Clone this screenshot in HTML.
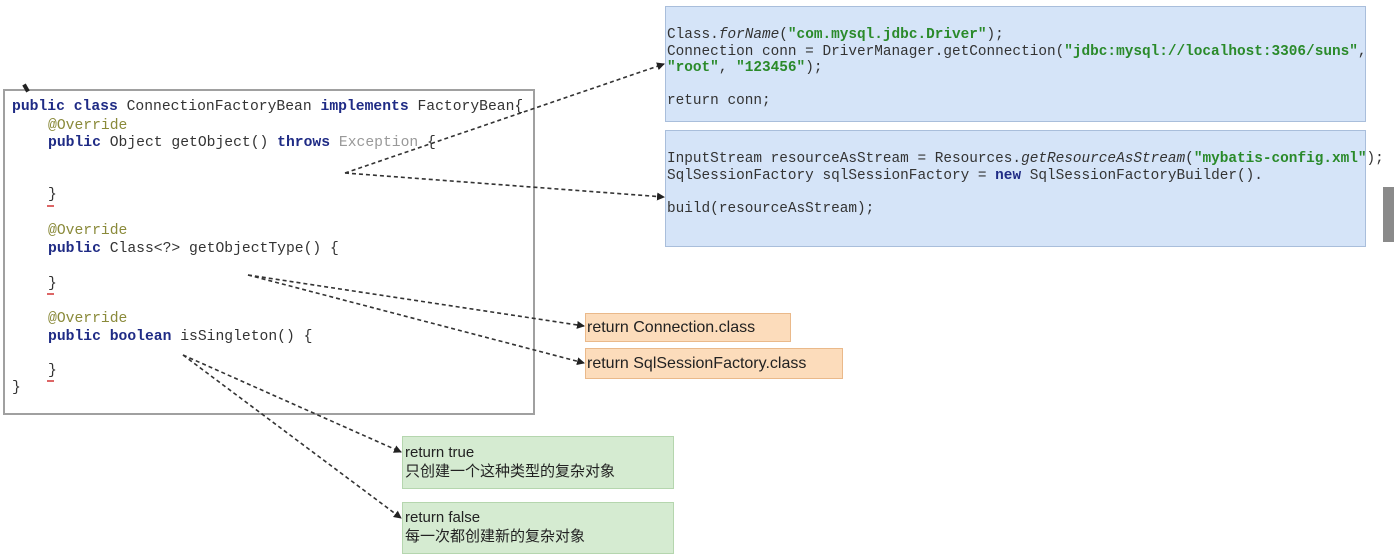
<!DOCTYPE html>
<html><head><meta charset="utf-8">
<style>
html,body{margin:0;padding:0;background:#fff;width:1394px;height:557px;overflow:hidden;position:relative}
.abs{position:absolute}
.mono{font-family:"Liberation Mono","DejaVu Sans Mono",monospace;font-size:14.4px;white-space:pre;color:#333}
.lc{font-size:14.7px}
.k{color:#1f2b85;font-weight:bold}
.an{color:#8a8a3a}
.s{color:#2a8a2a;font-weight:bold}
.gr{color:#999}
.i{font-style:italic}
.box{position:absolute;box-sizing:border-box}
.sans{font-family:"Liberation Sans","Noto Sans CJK SC",sans-serif;font-size:15px;color:#222}
</style></head><body>

<div class="box" style="left:3px;top:89px;width:532px;height:326px;border:2px solid #a0a0a0"></div>
<div class="abs" style="left:24px;top:84px;width:4px;height:8px;background:#222;transform:rotate(-30deg)"></div>

<div class="abs mono lc" style="left:12px;top:99px"><span class="k">public class</span> ConnectionFactoryBean <span class="k">implements</span> FactoryBean{</div>
<div class="abs mono lc an" style="left:48px;top:118px">@Override</div>
<div class="abs mono lc" style="left:48px;top:135px"><span class="k">public</span> Object getObject() <span class="k">throws</span> <span class="gr">Exception</span> {</div>
<div class="abs mono lc" style="left:48px;top:187px">}</div>
<div class="abs mono lc an" style="left:48px;top:223px">@Override</div>
<div class="abs mono lc" style="left:48px;top:241px"><span class="k">public</span> Class&lt;?&gt; getObjectType() {</div>
<div class="abs mono lc" style="left:48px;top:276px">}</div>
<div class="abs mono lc an" style="left:48px;top:311px">@Override</div>
<div class="abs mono lc" style="left:48px;top:329px"><span class="k">public boolean</span> isSingleton() {</div>
<div class="abs mono lc" style="left:48px;top:363px">}</div>
<div class="abs mono lc" style="left:12px;top:380px">}</div>
<div class="abs" style="left:47px;top:205px;width:7px;height:2px;background:#d66"></div>
<div class="abs" style="left:47px;top:293px;width:7px;height:2px;background:#d66"></div>
<div class="abs" style="left:47px;top:380px;width:7px;height:2px;background:#d66"></div>

<div class="box" style="left:665px;top:6px;width:701px;height:116px;background:#d5e4f8;border:1px solid #a9bedb"></div>
<div class="abs mono" style="left:667px;top:27px;line-height:16.5px">Class.<span class="i">forName</span>(<span class="s">"com.mysql.jdbc.Driver"</span>);
Connection conn = DriverManager.getConnection(<span class="s">"jdbc:mysql://localhost:3306/suns"</span>,
<span class="s">"root"</span>, <span class="s">"123456"</span>);

return conn;</div>

<div class="box" style="left:665px;top:130px;width:701px;height:117px;background:#d5e4f8;border:1px solid #a9bedb"></div>
<div class="abs mono" style="left:667px;top:151px;line-height:16.5px">InputStream resourceAsStream = Resources.<span class="i">getResourceAsStream</span>(<span class="s">"mybatis-config.xml"</span>);
SqlSessionFactory sqlSessionFactory = <span class="k">new</span> SqlSessionFactoryBuilder().

build(resourceAsStream);</div>

<div class="abs" style="left:1383px;top:187px;width:11px;height:55px;background:#8a8a8a"></div>

<div class="box sans" style="left:585px;top:313px;width:206px;height:29px;background:#fcdcbb;border:1px solid #eab98a;padding:5px 0 0 1px;font-size:16px">return Connection.class</div>
<div class="box sans" style="left:585px;top:348px;width:258px;height:31px;background:#fcdcbb;border:1px solid #eab98a;padding:6px 0 0 1px;font-size:16px">return SqlSessionFactory.class</div>

<div class="box sans" style="left:402px;top:436px;width:272px;height:53px;background:#d5ebd1;border:1px solid #b5d6ae;padding:6px 0 0 2px;line-height:19px;font-size:15px">return true<br>只创建一个这种类型的复杂对象</div>
<div class="box sans" style="left:402px;top:502px;width:272px;height:52px;background:#d5ebd1;border:1px solid #b5d6ae;padding:5px 0 0 2px;line-height:19px;font-size:15px">return false<br>每一次都创建新的复杂对象</div>

<svg class="abs" style="left:0;top:0" width="1394" height="557">
<defs><marker id="a" markerWidth="8" markerHeight="8" refX="7" refY="4" orient="auto" markerUnits="userSpaceOnUse"><path d="M0,0 L8,4 L0,8 Z" fill="#222"/></marker></defs>
<g stroke="#333" stroke-width="1.6" stroke-dasharray="4,3" fill="none" marker-end="url(#a)">
<path d="M345,173 L664,64"/>
<path d="M345,173 L664,197"/>
<path d="M248,275 L584,326"/>
<path d="M248,275 L584,363"/>
<path d="M183,355 L401,452"/>
<path d="M183,355 L401,518"/>
</g>
</svg>
</body></html>
